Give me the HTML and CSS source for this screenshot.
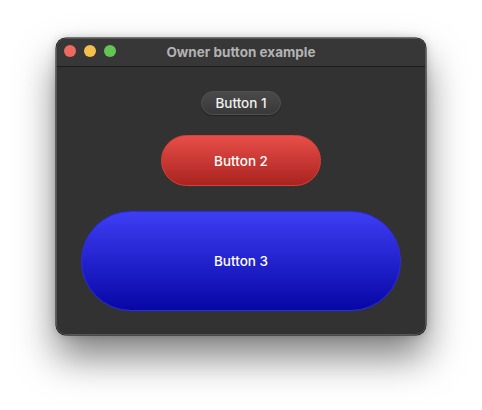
FILE: index.html
```html
<!DOCTYPE html>
<html>
<head>
<meta charset="utf-8">
<link rel="stylesheet" href="styles.css">
</head>
<body>
<div class="window">
  <div class="titlebar">
    <div class="lights">
      <span class="light red"></span>
      <span class="light yellow"></span>
      <span class="light green"></span>
    </div>
    <div class="title">Owner button example</div>
  </div>
  <div class="content">
    <button class="btn btn1">Button 1</button>
    <button class="btn btn2">Button 2</button>
    <button class="btn btn3">Button 3</button>
  </div>
</div>
</body>
</html>
```
FILE: styles.css
```css
html, body {
  margin: 0;
  padding: 0;
  background: #ffffff;
}
body {
  padding: 38px 0 0 56px;
  min-height: 410px;
  box-sizing: border-box;
  font-family: Inter, "Noto Sans", sans-serif;
}
.window {
  width: 370px;
  height: 297px;
  box-sizing: border-box;
  background: #323232;
  border-radius: 10px;
  border: 1px solid #555555;
  box-shadow: 0 0 0 0.5px #111, 0 22px 38px rgba(0,0,0,0.5), 0 0 10px rgba(0,0,0,0.2);
  overflow: hidden;
  display: flex;
  flex-direction: column;
}
.titlebar {
  height: 27px;
  flex: none;
  position: relative;
  display: flex;
  align-items: center;
  justify-content: center;
  border-bottom: 1px solid #1d1d1d;
  background: #373737;
}
.lights {
  position: absolute;
  left: 7px;
  top: 6px;
  display: flex;
  gap: 8px;
}
.light {
  width: 12px;
  height: 12px;
  border-radius: 50%;
  display: block;
}
.red { background: #ee6a5f; }
.yellow { background: #f5be4f; }
.green { background: #62c554; }
.title {
  color: #b3b3b3;
  font-weight: 700;
  font-size: 13.5px;
  margin-top: -1px;
}
.content {
  flex: 1;
  display: flex;
  flex-direction: column;
  align-items: center;
  padding-top: 24px;
}
.btn {
  font-family: Inter, "Noto Sans", sans-serif;
  font-size: 13.5px;
  color: #ffffff;
  box-sizing: border-box;
  padding: 0;
  cursor: default;
  font-weight: 500;
}
.btn1 {
  width: 80px;
  height: 24px;
  border-radius: 12px;
  border: 1px solid #505050;
  background: linear-gradient(#4a4a4a, #393939);
  color: #f0f0f0;
  box-shadow: 0 1px 1px rgba(0,0,0,0.3);
}
.btn2 {
  margin-top: 20px;
  width: 160px;
  height: 51px;
  border-radius: 26px;
  border: 1px solid #d8403a;
  background: linear-gradient(#e84e49, #a9231f);
}
.btn3 {
  margin-top: 25px;
  width: 320px;
  height: 100px;
  border-radius: 50px;
  border: 1px solid #2b2be8;
  background: linear-gradient(#3e3ef4, #0707a6);
}
```
